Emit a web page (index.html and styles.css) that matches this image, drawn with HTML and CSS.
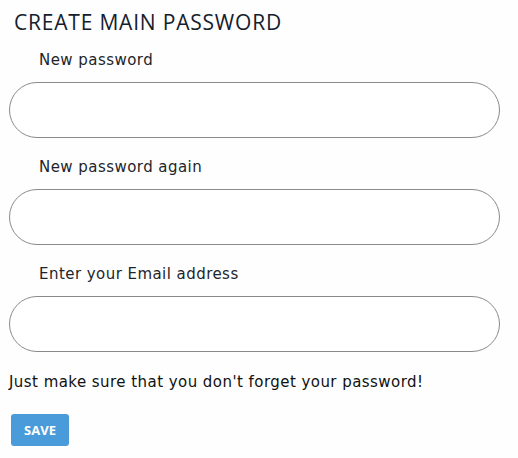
FILE: index.html
```html
<!DOCTYPE html>
<html>
<head>
<meta charset="utf-8">
<link rel="stylesheet" href="styles.css">
</head>
<body>
<div class="page">
  <h1 class="title">CREATE MAIN PASSWORD</h1>
  <form class="form">
    <div class="field">
      <label class="label">New password</label>
      <input class="input" type="password">
    </div>
    <div class="field">
      <label class="label">New password again</label>
      <input class="input" type="password">
    </div>
    <div class="field">
      <label class="label">Enter your Email address</label>
      <input class="input" type="email">
    </div>
    <p class="note">Just make sure that you don't forget your password!</p>
    <button class="save" type="button">SAVE</button>
  </form>
</div>
</body>
</html>
```
FILE: styles.css
```css
html, body {
  margin: 0;
  background: #fdfefd;
}
.page {
  padding: 8px 18px 0 9px;
  font-family: "DejaVu Sans", sans-serif;
  color: #1b1f24;
}
.title {
  margin: 0 0 0 5px;
  font-family: "Open Sans", sans-serif;
  font-size: 21px;
  font-weight: 400;
  letter-spacing: 0.8px;
  color: #14202e;
  line-height: 28px;
}
.form {
  display: flex;
  flex-direction: column;
}
.field {
  display: flex;
  flex-direction: column;
}
.label {
  margin: 14px 0 0 30px;
  font-size: 15px;
  line-height: 20px;
  letter-spacing: 0.45px;
  color: #1f252b;
}
.input {
  margin-top: 12px;
  height: 56px;
  box-sizing: border-box;
  border: 1px solid #8a8a8a;
  border-radius: 28px;
  background: #fff;
  outline: none;
}
.field + .field .label {
  margin-top: 19px;
}
.note {
  margin: 20px 0 0 0;
  font-size: 15px;
  line-height: 20px;
  letter-spacing: 0.45px;
  color: #111;
}
.save {
  align-self: flex-start;
  margin: 22px 0 0 2px;
  width: 58px;
  height: 32px;
  border: none;
  border-radius: 3px;
  background: #4a9bd9;
  color: #fff;
  font-family: "Open Sans", sans-serif;
  font-weight: 700;
  font-size: 13px;
  padding: 0;
}
```
